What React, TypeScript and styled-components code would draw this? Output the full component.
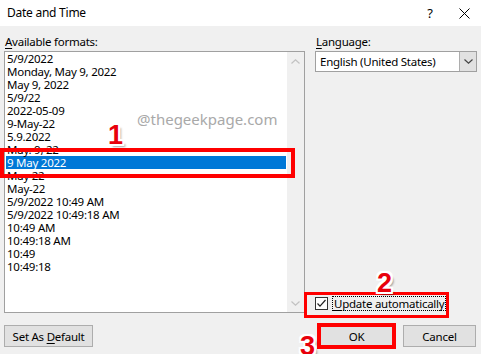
import styled, { createGlobalStyle } from "styled-components";

const GlobalStyle = createGlobalStyle`
  html, body {
    margin: 0;
    padding: 0;
    background: #f0f0f0;
  }
  * {
    box-sizing: border-box;
  }
`;

const formats = [
  "5/9/2022",
  "Monday, May 9, 2022",
  "May 9, 2022",
  "5/9/22",
  "2022-05-09",
  "9-May-22",
  "5.9.2022",
  "May. 9, 22",
  "9 May 2022",
  "May 22",
  "May-22",
  "5/9/2022 10:49 AM",
  "5/9/2022 10:49:18 AM",
  "10:49 AM",
  "10:49:18 AM",
  "10:49",
  "10:49:18",
];

const SELECTED = 8;

const Dialog = styled.div`
  position: relative;
  width: 481px;
  height: 354px;
  overflow: hidden;
  display: flex;
  flex-direction: column;
  background: #f0f0f0;
  font-family: "Segoe UI", "Noto Sans", sans-serif;
  font-size: 11.5px;
  letter-spacing: -0.25px;
  color: #000;
`;

const TitleBar = styled.div`
  height: 26px;
  flex: none;
  display: flex;
  align-items: center;
  padding-left: 7px;
  background: #fff;
`;

const Title = styled.div`
  flex: 1;
  font-size: 12px;
  line-height: 16px;
`;

const TitleButton = styled.div`
  width: 34px;
  display: flex;
  justify-content: center;
  align-items: center;
  font-size: 13px;
`;

const Body = styled.div`
  flex: 1;
  display: grid;
  grid-template-columns: 301px 162px;
  grid-template-rows: auto 1fr auto;
  column-gap: 10px;
  padding: 8px 4px 7px 4px;
`;

const Label = styled.div`
  height: 17px;
  line-height: 15px;
  padding-left: 1px;
`;

const Key = styled.span`
  text-decoration: underline;
  text-underline-offset: 2px;
`;

const ListBox = styled.div`
  display: flex;
  border: 1px solid #a0a0a0;
  background: #fff;
`;

const Items = styled.div`
  flex: 1;
  padding: 0 1px;
`;

const Item = styled.div<{ $selected?: boolean }>`
  height: 13px;
  line-height: 13px;
  padding-left: 1px;
  white-space: nowrap;
  background: ${(p) => (p.$selected ? "#0078d7" : "transparent")};
  color: ${(p) => (p.$selected ? "#fff" : "#000")};
`;

const ScrollBar = styled.div`
  width: 17px;
  display: flex;
  flex-direction: column;
  justify-content: space-between;
  align-items: center;
  padding: 7px 0 6px;
  background: #f0f0f0;
`;

const RightColumn = styled.div`
  display: flex;
  flex-direction: column;
  justify-content: space-between;
  padding-bottom: 2px;
`;

const Combo = styled.div`
  height: 21px;
  display: flex;
  border: 1px solid #a0a0a0;
  background: #fff;
`;

const ComboText = styled.div`
  flex: 1;
  padding-left: 4px;
  line-height: 19px;
`;

const ComboButton = styled.div`
  width: 17px;
  display: flex;
  align-items: center;
  justify-content: center;
  background: #e1e1e1;
  border-left: 1px solid #adadad;
`;

const CheckRow = styled.div`
  display: flex;
  align-items: center;
  gap: 4px;
`;

const CheckBox = styled.div`
  width: 13px;
  height: 13px;
  border: 1px solid #333;
  background: #fff;
  display: flex;
  align-items: center;
  justify-content: center;
`;

const CheckLabel = styled.div`
  border: 1px dotted #000;
  line-height: 13px;
  padding: 0 1px;
  white-space: nowrap;
`;

const ButtonRow = styled.div<{ $end?: boolean }>`
  margin-top: 12px;
  display: flex;
  gap: 10px;
  justify-content: ${(p) => (p.$end ? "flex-end" : "flex-start")};
  padding-right: ${(p) => (p.$end ? "1px" : "0")};
`;

const Button = styled.div<{ $w: number }>`
  width: ${(p) => p.$w}px;
  height: 22px;
  display: flex;
  align-items: center;
  justify-content: center;
  background: #e1e1e1;
  border: 1px solid #adadad;
  white-space: nowrap;
`;

const Highlight = styled.div`
  position: absolute;
  border: 4px solid #ff0000;
`;

const Step = styled.div`
  position: absolute;
  font-family: "Liberation Sans", Arial, sans-serif;
  font-weight: 700;
  font-size: 27px;
  line-height: 1;
  letter-spacing: 0;
  color: #e8000b;
  text-shadow: -2px 0 #fff, 2px 0 #fff, 0 -2px #fff, 0 2px #fff, -2px -2px #fff,
    2px 2px #fff, -2px 2px #fff, 2px -2px #fff, 3px 3px 2px rgba(0, 0, 0, 0.35);
`;

const Watermark = styled.div`
  position: absolute;
  left: 137px;
  top: 109px;
  font-size: 15px;
  letter-spacing: 0;
  color: #a9a9a9;
`;

function Chevron({ up, color = "#a0a0a0" }: { up?: boolean; color?: string }) {
  return (
    <svg width="9" height="5" viewBox="0 0 9 5">
      <path
        d={up ? "M0.5 4.5 L4.5 0.8 L8.5 4.5" : "M0.5 0.5 L4.5 4.2 L8.5 0.5"}
        fill="none"
        stroke={color}
        strokeWidth="1.2"
      />
    </svg>
  );
}

export default function App() {
  return (
    <>
      <GlobalStyle />
      <Dialog>
        <TitleBar>
          <Title>Date and Time</Title>
          <TitleButton>?</TitleButton>
          <TitleButton>
            <svg width="11" height="11" viewBox="0 0 11 11">
              <path d="M0.5 0.5 L10.5 10.5 M10.5 0.5 L0.5 10.5" stroke="#000" strokeWidth="1" />
            </svg>
          </TitleButton>
        </TitleBar>
        <Body>
          <Label>
            <Key>A</Key>vailable formats:
          </Label>
          <Label>
            <Key>L</Key>anguage:
          </Label>
          <ListBox>
            <Items>
              {formats.map((f, i) => (
                <Item key={i} $selected={i === SELECTED}>
                  {f}
                </Item>
              ))}
            </Items>
            <ScrollBar>
              <Chevron up color="#c2c2c2" />
              <Chevron color="#c2c2c2" />
            </ScrollBar>
          </ListBox>
          <RightColumn>
            <Combo>
              <ComboText>English (United States)</ComboText>
              <ComboButton>
                <Chevron color="#444" />
              </ComboButton>
            </Combo>
            <CheckRow>
              <CheckBox>
                <svg width="11" height="11" viewBox="0 0 11 11">
                  <path d="M1.5 5.5 L4 8.2 L9.5 2" fill="none" stroke="#222" strokeWidth="1.2" />
                </svg>
              </CheckBox>
              <CheckLabel>
                <Key>U</Key>pdate automatically
              </CheckLabel>
            </CheckRow>
          </RightColumn>
          <ButtonRow>
            <Button $w={89}>
              Set As&nbsp;<Key>D</Key>efault
            </Button>
          </ButtonRow>
          <ButtonRow $end>
            <Button $w={73}>OK</Button>
            <Button $w={73}>Cancel</Button>
          </ButtonRow>
        </Body>

        <Watermark>@thegeekpage.com</Watermark>
        <Highlight style={{ left: 0, top: 148, width: 295, height: 30 }} />
        <Highlight style={{ left: 304, top: 292, width: 145, height: 26, borderWidth: 3 }} />
        <Highlight style={{ left: 317, top: 323, width: 79, height: 26 }} />
        <Step style={{ left: 108, top: 122 }}>1</Step>
        <Step style={{ left: 377, top: 270 }}>2</Step>
        <Step style={{ left: 300, top: 333 }}>3</Step>
      </Dialog>
    </>
  );
}
